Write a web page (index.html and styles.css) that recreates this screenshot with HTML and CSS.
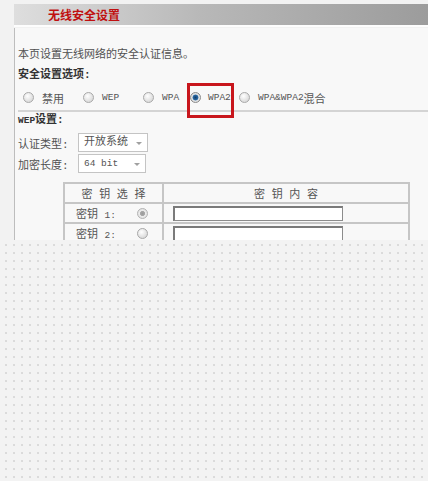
FILE: index.html
```html
<!DOCTYPE html>
<html lang="zh-CN">
<head>
    <meta charset="UTF-8">
    <meta name="viewport" content="width=device-width, initial-scale=1.0">
    <title>无线安全设置</title>
    <link rel="stylesheet" href="styles.css">
</head>
<body>
    <div class="shot">
        <div class="title-bar"><span class="title">无线安全设置</span></div>
        <div class="panel">
            <p class="intro">本页设置无线网络的安全认证信息。</p>
            <p class="section">安全设置选项:</p>
            <div class="modes">
                <label class="opt w60"><span class="radio"></span>禁用</label>
                <label class="opt w60"><span class="radio"></span><span class="en">WEP</span></label>
                <label class="opt w47"><span class="radio"></span><span class="en">WPA</span></label>
                <label class="opt w49"><span class="radio checked"></span><span class="en">WPA2</span></label>
                <label class="opt"><span class="radio"></span><span class="en">WPA&amp;WPA2</span>混合</label>
                <div class="highlight"></div>
            </div>
            <p class="section wep-title"><span class="en">WEP</span>设置:</p>
            <div class="field">
                <span class="field-label">认证类型:</span>
                <span class="select s70">开放系统<i class="arrow"></i></span>
            </div>
            <div class="field">
                <span class="field-label">加密长度:</span>
                <span class="select s68"><span class="en">64 bit</span><i class="arrow"></i></span>
            </div>
            <table class="keys">
                <tr class="head">
                    <td class="col-sel">密 钥 选 择</td>
                    <td>密 钥 内 容</td>
                </tr>
                <tr>
                    <td class="col-sel"><div class="key-sel"><span class="key-name">密钥 <span class="en">1:</span></span><span class="radio dim"></span></div></td>
                    <td><span class="key-input"></span></td>
                </tr>
                <tr>
                    <td class="col-sel"><div class="key-sel"><span class="key-name">密钥 <span class="en">2:</span></span><span class="radio"></span></div></td>
                    <td><span class="key-input"></span></td>
                </tr>
            </table>
        </div>
    </div>
</body>
</html>
```

FILE: styles.css
```css
body {
    margin: 0;
    padding: 0;
    height: 481px;
    font-family: 'Liberation Mono', 'Noto Sans CJK SC', monospace;
    font-size: 11px;
    color: #4a4a4a;
    background-color: #f3f3f3;
    background-image: radial-gradient(circle, #dadada 0.7px, transparent 1.2px);
    background-size: 8px 8px;
    background-position: 2px 1px;
}
p {
    margin: 0;
}
.en {
    font-size: 9.5px;
}
.shot {
    height: 240px;
    overflow: hidden;
    padding-top: 4px;
    box-sizing: border-box;
    background-color: #f2f2f2;
}
.title-bar {
    margin-left: 14px;
    height: 21px;
    display: flex;
    align-items: center;
    padding-left: 34px;
    background: linear-gradient(to right, #dedede, #b8b8b8 45%, #9c9c9c);
    border-bottom: 2px solid #fdfdfd;
}
.title {
    font-family: 'Noto Sans CJK SC', sans-serif;
    font-size: 12px;
    font-weight: bold;
    color: #c01010;
}
.panel {
    margin-left: 14px;
    margin-top: 1px;
    border-left: 1px solid #bdbdbd;
    padding: 17px 0 0 3px;
    height: 300px;
    background-color: #f8f8f8;
}
.intro {
    line-height: 20px;
    color: #505050;
}
.section {
    line-height: 20px;
    font-weight: bold;
    color: #333;
}
.modes {
    position: relative;
    display: flex;
    align-items: center;
    height: 25px;
    padding-left: 5px;
    border-bottom: 2px solid #d4d4d4;
}
.opt {
    display: flex;
    align-items: center;
    color: #555;
}
.w60 { width: 60px; }
.w47 { width: 47px; }
.w49 { width: 49px; }
.radio {
    width: 11px;
    height: 11px;
    box-sizing: border-box;
    border: 1px solid #a9a9a9;
    border-radius: 50%;
    background: radial-gradient(circle at 40% 35%, #ffffff, #dcdcdc 70%);
    margin-right: 8px;
    flex-shrink: 0;
}
.radio.checked {
    background: radial-gradient(circle, #123e6a 0, #2a6aa6 2.6px, #e6e6e6 3.3px, #cfcfcf 100%);
    border-color: #8a8a8a;
    margin-right: 7px;
}
.radio.dim {
    background: radial-gradient(circle, #9a9a9a 0, #a8a8a8 2.2px, #ececec 2.9px, #d8d8d8 100%);
    border-color: #b4b4b4;
    margin-right: 0;
}
.highlight {
    position: absolute;
    left: 169px;
    top: -2px;
    width: 47px;
    height: 35px;
    box-sizing: border-box;
    border: 3px solid #c8161c;
}
.wep-title {
    line-height: 16px;
}
.field {
    display: flex;
    align-items: center;
    height: 21px;
}
.wep-title + .field {
    margin-top: 3px;
}
.field-label {
    width: 60px;
    color: #505050;
}
.select {
    position: relative;
    height: 19px;
    box-sizing: border-box;
    border: 1px solid #c4c4c4;
    background-color: #fff;
    padding-left: 5px;
    line-height: 17px;
    color: #555;
}
.s70 { width: 70px; }
.s68 { width: 68px; }
.arrow {
    position: absolute;
    right: 5px;
    top: 8px;
    border-left: 3px solid transparent;
    border-right: 3px solid transparent;
    border-top: 3px solid #a0a0a0;
}
.keys {
    margin: 8px 0 0 45px;
    width: 347px;
    border-collapse: collapse;
    border: 2px solid #c6c6c6;
}
.keys td {
    height: 18px;
    padding: 0;
    border: 2px solid #c6c6c6;
    color: #555;
}
.keys .head td {
    text-align: center;
}
.keys .col-sel {
    width: 97px;
}
.key-sel {
    display: flex;
    align-items: center;
    padding-left: 11px;
}
.key-name {
    width: 61px;
}
.key-input {
    display: block;
    margin-left: 9px;
    width: 170px;
    height: 15px;
    box-sizing: border-box;
    background-color: #fff;
    border: 1px solid #8c8c8c;
    border-top: 2px solid #7a7a7a;
    border-left: 2px solid #7a7a7a;
}
```
